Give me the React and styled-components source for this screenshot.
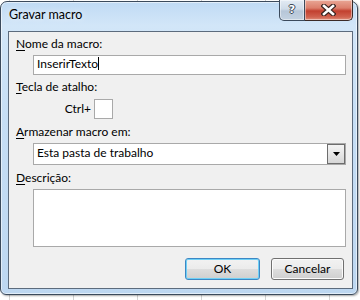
import styled, { createGlobalStyle } from "styled-components";

const GlobalStyle = createGlobalStyle`
  html, body {
    margin: 0;
    padding: 0;
  }
  body {
    width: 360px;
    height: 300px;
    overflow: hidden;
    background-color: #fff;
    background-image: linear-gradient(to right, #d4d4d4 1px, transparent 1px);
    background-size: 64px 100%;
    background-position: 9px 0;
    font-family: Lato, "Open Sans", sans-serif;
    font-size: 12px;
    color: #000;
  }
`;

const Window = styled.div`
  width: 358px;
  height: 294px;
  margin-top: 1px;
  box-sizing: border-box;
  border: 1px solid #3b4a5c;
  border-radius: 7px 7px 6px 6px;
  background: linear-gradient(180deg, #c0daf4 0%, #d2e6f8 8%, #c6def5 40%, #bdd7f1 100%);
  box-shadow: inset 0 0 0 1px rgba(255, 255, 255, 0.55), 1px 1px 2px rgba(0, 0, 0, 0.35);
  padding: 0 4px 5px 7px;
  display: flex;
  flex-direction: column;
`;

const TitleBar = styled.div`
  height: 29px;
  display: flex;
  align-items: flex-start;
`;

const Title = styled.div`
  padding: 5px 0 0 1px;
  line-height: 16px;
  font-size: 12.5px;
  text-shadow: 0 0 6px rgba(255, 255, 255, 0.9);
`;

const CaptionGroup = styled.div`
  margin-left: auto;
  margin-top: -2px;
  display: flex;
`;

const CaptionButton = styled.div`
  height: 21px;
  box-sizing: border-box;
  width: ${(p) => p.$w}px;
  border: 1px solid ${(p) => (p.$close ? "#3b2a27" : "#3b4a5c")};
  border-top: none;
  border-left-width: ${(p) => (p.$close ? 0 : 1)}px;
  border-radius: ${(p) => (p.$close ? "0 0 5px 0" : "0 0 0 5px")};
  background: ${(p) =>
    p.$close
      ? "linear-gradient(180deg, #e9a796 0%, #dc7f6c 40%, #c2402f 55%, #d0624f 85%, #e0907c 100%)"
      : "linear-gradient(180deg, #e3ebf4 0%, #cfdbe8 45%, #b6c6d8 55%, #c4d2e1 100%)"};
  box-shadow: inset 0 0 0 1px rgba(255, 255, 255, 0.45);
  display: flex;
  align-items: center;
  justify-content: center;
`;

const HelpGlyph = styled.span`
  font-family: "DejaVu Sans", sans-serif;
  font-weight: bold;
  font-size: 11px;
  line-height: 12px;
  color: #fff;
  text-shadow: 1px 0 #3a4654, -1px 0 #3a4654, 0 1px #3a4654, 0 -1px #3a4654;
`;

const Client = styled.div`
  flex: 1;
  border: 1px solid #5c6b7d;
  background: #f0f0f0;
  padding: 4px 6px 8px 7px;
  display: flex;
  flex-direction: column;
`;

const Label = styled.div`
  line-height: 16px;
  height: 16px;
  margin-top: ${(p) => p.$mt || 0}px;
  white-space: nowrap;
`;

const Key = styled.span`
  text-decoration: underline;
  text-underline-offset: 2px;
`;

const Field = styled.div`
  margin: 3px 0 0 17px;
  height: ${(p) => p.$h}px;
  box-sizing: border-box;
  border: 1px solid #a9a9a9;
  background: #fff;
  padding: 0 3px;
  line-height: 16px;
  white-space: nowrap;
`;

const Caret = styled.span`
  display: inline-block;
  width: 1px;
  height: 13px;
  background: #000;
  vertical-align: -2px;
`;

const CtrlRow = styled.div`
  margin-top: 4px;
  height: 20px;
  display: flex;
  align-items: center;
  gap: 3px;
`;

const CtrlLabel = styled.span`
  width: 75px;
  text-align: right;
  line-height: 16px;
`;

const KeyBox = styled.div`
  width: 19px;
  height: 20px;
  box-sizing: border-box;
  border: 1px solid #a9a9a9;
  background: #fff;
`;

const Select = styled.div`
  margin: 3px 0 0 17px;
  height: 22px;
  box-sizing: border-box;
  border: 1px solid #a9a9a9;
  background: #fff;
  display: flex;
  justify-content: space-between;
`;

const SelectText = styled.span`
  padding: 1px 0 0 3px;
  line-height: 16px;
`;

const DropButton = styled.div`
  width: 18px;
  height: 20px;
  box-sizing: border-box;
  border: 1px solid #6d6d6d;
  background: linear-gradient(180deg, #f4f4f4 0%, #e6e6e6 50%, #d6d6d6 100%);
  display: flex;
  align-items: center;
  justify-content: center;
`;

const Buttons = styled.div`
  margin-top: 11px;
  display: flex;
  justify-content: flex-end;
  gap: 11px;
  padding-right: 2px;
`;

const Button = styled.div`
  width: ${(p) => (p.$default ? 75 : 73)}px;
  height: 22px;
  box-sizing: border-box;
  border: 1px solid ${(p) => (p.$default ? "#3c87c4" : "#707070")};
  border-radius: 3px;
  background: linear-gradient(180deg, #f2f2f2 0%, #ebebeb 50%, #dddddd 51%, #cfcfcf 100%);
  box-shadow: inset 0 0 0 1px ${(p) => (p.$default ? "#6fd0f6" : "#fbfbfb")};
  display: flex;
  align-items: center;
  justify-content: center;
  line-height: 16px;
`;

const App = () => {
  return (
    <>
      <GlobalStyle />
      <Window>
        <TitleBar>
          <Title>Gravar macro</Title>
          <CaptionGroup>
            <CaptionButton $w={26}>
              <HelpGlyph>?</HelpGlyph>
            </CaptionButton>
            <CaptionButton $w={48} $close>
              <svg width="15" height="12" viewBox="0 0 15 12">
                <path d="M3 2 L12 10 M12 2 L3 10" stroke="#3a2420" strokeWidth="5" strokeLinecap="square" />
                <path d="M3 2 L12 10 M12 2 L3 10" stroke="#fff" strokeWidth="2.6" strokeLinecap="square" />
              </svg>
            </CaptionButton>
          </CaptionGroup>
        </TitleBar>
        <Client>
          <Label>
            <Key>N</Key>ome da macro:
          </Label>
          <Field $h={20}>
            InserirTexto
            <Caret />
          </Field>
          <Label $mt={4}>
            <Key>T</Key>ecla de atalho:
          </Label>
          <CtrlRow>
            <CtrlLabel>Ctrl+</CtrlLabel>
            <KeyBox />
          </CtrlRow>
          <Label $mt={5}>
            <Key>A</Key>rmazenar macro em:
          </Label>
          <Select>
            <SelectText>Esta pasta de trabalho</SelectText>
            <DropButton>
              <svg width="7" height="4" viewBox="0 0 7 4">
                <path d="M0 0 H7 L3.5 4 Z" fill="#000" />
              </svg>
            </DropButton>
          </Select>
          <Label $mt={5}>
            <Key>D</Key>escrição:
          </Label>
          <Field $h={58} />
          <Buttons>
            <Button $default>OK</Button>
            <Button>Cancelar</Button>
          </Buttons>
        </Client>
      </Window>
    </>
  );
};

export default App;
